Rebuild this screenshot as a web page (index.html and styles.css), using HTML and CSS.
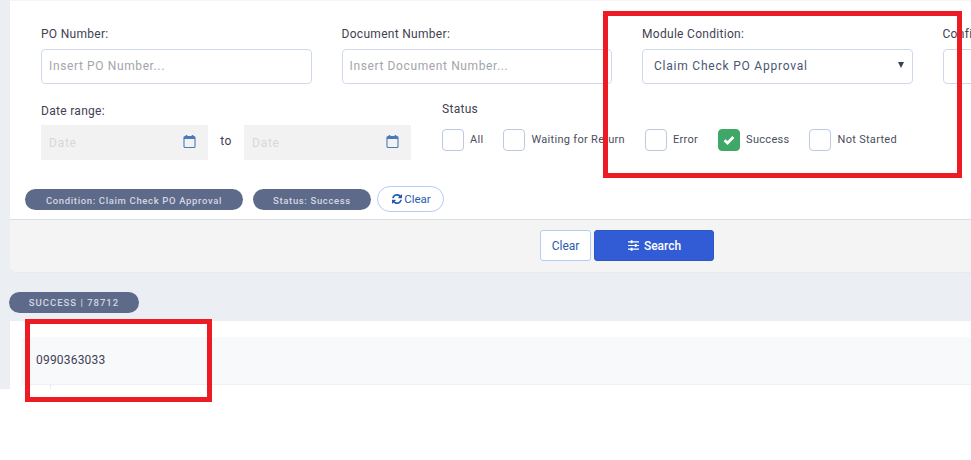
FILE: index.html
```html
<!DOCTYPE html>
<html lang="en">
<head>
<meta charset="utf-8">
<title>Claim Check</title>
<link rel="stylesheet" href="styles.css">
</head>
<body>
<div class="page">
  <section class="filter-card">
    <div class="filter-body">
      <div class="field-row">
        <div class="field">
          <label class="label">PO Number:</label>
          <div class="input placeholder">Insert PO Number...</div>
        </div>
        <div class="field">
          <label class="label">Document Number:</label>
          <div class="input placeholder">Insert Document Number...</div>
        </div>
        <div class="field">
          <label class="label">Module Condition:</label>
          <div class="input select"><span>Claim Check PO Approval</span><span class="caret"></span></div>
        </div>
        <div class="field">
          <label class="label">Confirmation:</label>
          <div class="input"></div>
        </div>
      </div>
      <div class="second-row">
        <div class="date-field">
          <label class="label">Date range:</label>
          <div class="date-range">
            <div class="date">
              <span>Date</span>
              <svg class="cal" viewBox="0 0 13 14"><path d="M1 3.5a1 1 0 0 1 1-1h9a1 1 0 0 1 1 1v9a1 1 0 0 1-1 1H2a1 1 0 0 1-1-1z" fill="none" stroke="#4a7ab8" stroke-width="1.1"/><path d="M1 3h11v2H1z" fill="#4a7ab8"/><path d="M3.5 1v2.5M9.5 1v2.5" stroke="#4a7ab8" stroke-width="1.6"/></svg>
            </div>
            <div class="to">to</div>
            <div class="date">
              <span>Date</span>
              <svg class="cal" viewBox="0 0 13 14"><path d="M1 3.5a1 1 0 0 1 1-1h9a1 1 0 0 1 1 1v9a1 1 0 0 1-1 1H2a1 1 0 0 1-1-1z" fill="none" stroke="#4a7ab8" stroke-width="1.1"/><path d="M1 3h11v2H1z" fill="#4a7ab8"/><path d="M3.5 1v2.5M9.5 1v2.5" stroke="#4a7ab8" stroke-width="1.6"/></svg>
            </div>
          </div>
        </div>
        <div class="status-field">
          <div class="label status-label">Status</div>
          <div class="checks">
            <div class="check"><span class="box"></span>All</div>
            <div class="check"><span class="box"></span>Waiting for Return</div>
            <div class="check"><span class="box"></span>Error</div>
            <div class="check"><span class="box on"><svg viewBox="0 0 12 10" class="tick"><path d="M1.6 5.2 4.5 8 10.4 2" fill="none" stroke="#fff" stroke-width="2.8"/></svg></span>Success</div>
            <div class="check"><span class="box"></span>Not Started</div>
          </div>
        </div>
      </div>
      <div class="chips">
        <span class="chip chip-condition">Condition: Claim Check PO Approval</span>
        <span class="chip chip-status">Status: Success</span>
        <button class="chip-clear"><svg class="refresh" viewBox="0 0 1536 1536"><path fill="#1f5bb0" d="M1511 928q0 5-1 7-64 268-268 434.5t-478 166.5q-146 0-282.5-55t-243.5-157l-129 129q-19 19-45 19t-45-19-19-45v-448q0-26 19-45t45-19h448q26 0 45 19t19 45-19 45l-137 137q71 66 161 102t187 36q134 0 250-65t186-179q11-17 53-117 8-23 30-23h192q13 0 22.5 9.5t9.5 22.5zm25-800v448q0 26-19 45t-45 19h-448q-26 0-45-19t-19-45 19-45l138-138q-148-137-349-137-134 0-250 65t-186 179q-11 17-53 117-8 23-30 23h-199q-13 0-22.5-9.5t-9.5-22.5v-7q65-268 270-434.5t480-166.5q146 0 284 55.5t245 156.5l130-129q19-19 45-19t45 19 19 45z"/></svg>Clear</button>
      </div>
    </div>
    <div class="filter-footer">
      <button class="btn-clear">Clear</button>
      <button class="btn-search"><svg class="sliders" viewBox="0 0 12 12"><path d="M0 2h12M0 6h12M0 10h12" stroke="#fff" stroke-width="1.2"/><path d="M3 .4h2v3.2H3zM7.4 4.4h2v3.2h-2zM3 8.4h2v3.2H3z" fill="#fff"/></svg>Search</button>
    </div>
  </section>
  <div class="result-chip">SUCCESS | 78712</div>
  <section class="result-card">
    <div class="result-row">0990363033</div>
    <div class="row-tick"></div>
  </section>
</div>
<div class="mark mark-a"></div>
<div class="mark mark-b"></div>
</body>
</html>
```
FILE: styles.css
```css
* { box-sizing: border-box; }
html, body { margin: 0; padding: 0; background: #fff; }
body {
  width: 971px;
  height: 460px;
  overflow: hidden;
  position: relative;
  font-family: Roboto, "Liberation Sans", sans-serif;
  color: #3f4254;
}
.page {
  height: 389px;
  background: #ebeff3;
  padding-left: 10px;
  overflow: hidden;
}
.filter-card {
  width: 961px;
  height: 273px;
  background: #fff;
  border-top: 1px solid #f5f5f5;
  border-bottom: 1px solid #e6e9ee;
  border-radius: 0 0 0 8px;
  overflow: hidden;
  display: flex;
  flex-direction: column;
}
.filter-body {
  height: 219px;
  padding: 26px 0 0 31px;
  position: relative;
  border-bottom: 1px solid #d9dde6;
  flex: none;
}
.field-row { display: flex; gap: 30px; width: 1200px; }
.field { width: 270.5px; flex: none; }
.label {
  display: block;
  font-size: 12px;
  line-height: 14px;
  letter-spacing: .3px;
  color: #3f4254;
  margin-bottom: 8px;
}
.input {
  height: 35px;
  border: 1px solid #d0d9ea;
  border-radius: 4px;
  background: #fff;
  font-size: 12px;
  letter-spacing: .62px;
  padding: 0 7px 2px;
  display: flex;
  align-items: center;
}
.placeholder { color: #a3a5ab; }
.select {
  color: #4b5672;
  padding: 0 8px 2px 11px;
  letter-spacing: .78px;
  justify-content: space-between;
}
.caret {
  width: 0;
  height: 0;
  border-left: 3px solid transparent;
  border-right: 3px solid transparent;
  border-top: 6px solid #344258;
  margin: -2px 0 0;
}
.second-row { display: flex; gap: 31px; margin-top: 20px; }
.date-field { width: 370px; flex: none; }
.date-field .label { margin-bottom: 7px; }
.date-range { display: flex; height: 35px; }
.date {
  flex: 1;
  background: #f2f2f2;
  display: flex;
  align-items: center;
  justify-content: space-between;
  padding: 0 12px 0 8px;
  font-size: 12px;
  letter-spacing: .75px;
  color: #d6d8dc;
}
.to {
  width: 36px;
  flex: none;
  background: #fff;
  text-align: center;
  line-height: 33px;
  font-size: 12px;
  letter-spacing: .3px;
  color: #3f4254;
}
.cal { width: 13px; height: 14px; margin-top: -3px; }
.status-field { flex: 1; margin-top: -2px; }
.status-label { margin-bottom: 13px; }
.checks { display: flex; gap: 20px; }
.check {
  display: flex;
  align-items: center;
  gap: 6px;
  font-size: 11px;
  letter-spacing: .3px;
  line-height: 22px;
  color: #4a4e5c;
}
.box {
  width: 22px;
  height: 22px;
  border: 1px solid #bccadf;
  border-radius: 4px;
  background: #fff;
  display: flex;
  align-items: center;
  justify-content: center;
}
.box.on { background: #3fa768; border-color: #3fa768; }
.tick { width: 12px; height: 10px; }
.chips {
  position: absolute;
  left: 15px;
  top: 185px;
  display: flex;
  align-items: center;
  gap: 10px;
}
.chip {
  height: 21px;
  border-radius: 11px;
  background: #5e6a8a;
  color: #d3d7e0;
  font-size: 9.5px;
  font-weight: 500;
  letter-spacing: .65px;
  padding-top: 1px;
  display: flex;
  align-items: center;
  justify-content: center;
  margin-top: 1px;
}
.chip-condition { width: 218px; }
.chip-status { width: 118px; }
.chip-clear {
  margin-left: -4px;
  width: 67px;
  height: 26px;
  border: 1px solid #b3cdf5;
  border-radius: 13px;
  background: #fff;
  color: #1f5bb0;
  font: 400 11.5px Roboto, "Liberation Sans", sans-serif;
  display: flex;
  align-items: center;
  justify-content: center;
  gap: 2px;
  padding: 0 0 0 2px;
}
.refresh { width: 10px; height: 10px; }
.filter-footer {
  flex: 1;
  background: #f4f4f4;
  padding: 10px 0 0 530px;
  display: flex;
  align-items: flex-start;
  gap: 3px;
}
.btn-clear {
  width: 51px;
  height: 31px;
  border: 1px solid #b3cdf5;
  border-radius: 3px;
  background: #fff;
  color: #2a5cab;
  font: 400 12px Roboto, "Liberation Sans", sans-serif;
  padding: 0;
}
.btn-search {
  width: 120px;
  height: 31px;
  border: 1px solid #2c57c9;
  border-radius: 3px;
  background: #315cd6;
  color: #fff;
  font: 500 12px Roboto, "Liberation Sans", sans-serif;
  display: flex;
  align-items: center;
  justify-content: center;
  gap: 5px;
  padding: 0 0 0 1px;
}
.sliders { width: 11px; height: 11px; }
.result-chip {
  width: 130px;
  height: 21px;
  margin: 19px 0 0 -1px;
  border-radius: 11px;
  background: #5e6a8a;
  color: #d3d7e0;
  font-size: 9.5px;
  font-weight: 500;
  letter-spacing: 1px;
  display: flex;
  align-items: center;
  justify-content: center;
}
.result-card {
  margin-top: 8px;
  background: #fff;
  height: 80px;
  padding: 16px 0 0 11px;
}
.result-row {
  height: 48px;
  background: #f8f9fb;
  border-bottom: 1px solid #eef0f4;
  border-radius: 4px 0 0 4px;
  padding-left: 15px;
  font-size: 12px;
  line-height: 46px;
  letter-spacing: .2px;
  color: #3f4254;
}
.row-tick {
  width: 0;
  height: 4px;
  margin-left: 29px;
  border-left: 1px dotted #e0e3e8;
}
.mark { position: absolute; border: 5px solid #ed1c24; pointer-events: none; }
.mark-a { left: 603px; top: 11px; width: 359px; height: 167px; }
.mark-b { left: 25px; top: 319px; width: 187px; height: 83px; }
```
